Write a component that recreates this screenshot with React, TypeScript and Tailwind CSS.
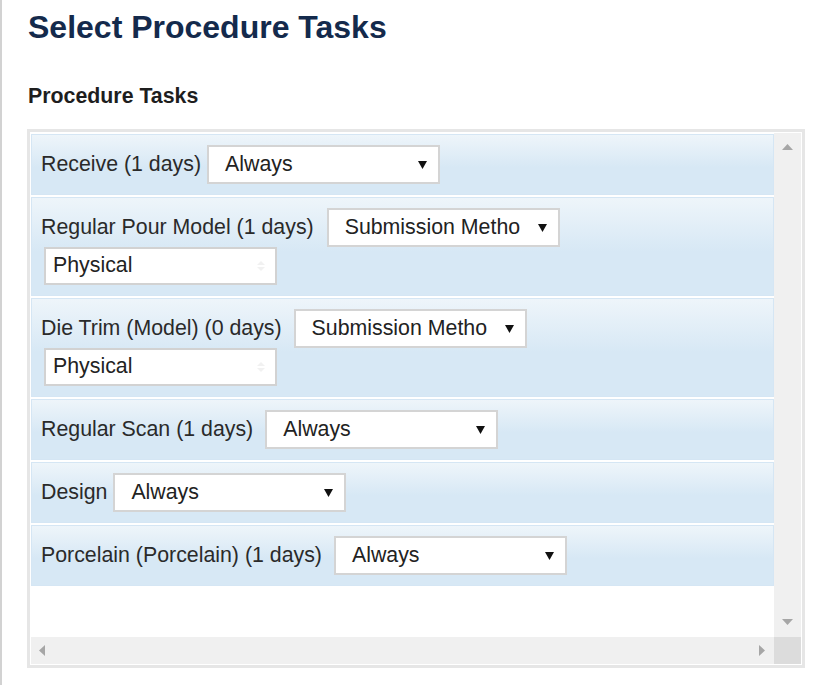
import React from "react";

const font = { fontFamily: '"Liberation Sans", Arial, sans-serif' };

function Arrow() {
  return (
    <svg width="9" height="9" viewBox="0 0 9 9" className="shrink-0">
      <polygon points="0,1 9,1 4.5,9" fill="#111" />
    </svg>
  );
}

function Select({ value, ml }: { value: string; ml: string }) {
  return (
    <div
      className={`${ml} flex h-[39px] w-[233px] shrink-0 items-center justify-between border-2 border-[#d4d4d4] bg-white pl-[16px] pr-[11px]`}
    >
      <span className="whitespace-nowrap text-[21.33px] leading-none text-[#222]">{value}</span>
      <Arrow />
    </div>
  );
}

function Input() {
  return (
    <div className="ml-[3px] flex h-[38px] w-[233px] items-center justify-between border-2 border-[#d2d2d2] bg-white pl-[7px] pr-[10px]">
      <span className="text-[21.33px] leading-none text-[#222]">Physical</span>
      <svg width="8" height="10" viewBox="0 0 8 10">
        <polygon points="4,0 8,4 0,4" fill="#f1f1f1" />
        <polygon points="0,6 8,6 4,10" fill="#f1f1f1" />
      </svg>
    </div>
  );
}

type Row = { label: string; value: string; ml: string; input?: boolean };

const rows: Row[] = [
  { label: "Receive (1 days)", value: "Always", ml: "ml-[6px]" },
  { label: "Regular Pour Model (1 days)", value: "Submission Metho", ml: "ml-[13px]", input: true },
  { label: "Die Trim (Model) (0 days)", value: "Submission Metho", ml: "ml-[12px]", input: true },
  { label: "Regular Scan (1 days)", value: "Always", ml: "ml-[12px]" },
  { label: "Design", value: "Always", ml: "ml-[6px]" },
  { label: "Porcelain (Porcelain) (1 days)", value: "Always", ml: "ml-[12px]" },
];

export default function App() {
  return (
    <div style={font} className="min-h-[685px] w-[824px] border-l-2 border-[#d2d2d2] bg-white">
      <h1 className="pl-[26px] pt-[10px] text-[32px] font-bold leading-[35px] text-[#142a4c]">
        Select Procedure Tasks
      </h1>
      <h2 className="mt-[39px] pl-[26px] text-[21.33px] font-bold leading-[24px] text-[#1e1e1e]">
        Procedure Tasks
      </h2>
      <div className="ml-[25px] mt-[21px] h-[539px] w-[778px] border-[3px] border-[#e6e6e6] bg-white p-[1px]">
        <div className="grid h-full grid-cols-[1fr_27px] grid-rows-[1fr_27px]">
          <div className="flex flex-col gap-[2px] overflow-hidden pt-[1px]">
            {rows.map((r) => (
              <div
                key={r.label}
                className="border border-[#d5e6f4] bg-[linear-gradient(to_bottom,#eef5fa,#d7e8f5_55%,#d7e8f5)] pb-[10px] pl-[9px] pt-[10px]"
              >
                <div className="flex items-center">
                  <span className="whitespace-nowrap text-[21.33px] leading-none text-[#2a2a2a]">{r.label}</span>
                  <Select value={r.value} ml={r.ml} />
                </div>
                {r.input && <Input />}
              </div>
            ))}
          </div>
          <div className="flex flex-col items-center justify-between bg-[#f0f0f0] pb-[12px] pt-[11px]">
            <svg width="11" height="6" viewBox="0 0 11 6">
              <polygon points="5.5,0 11,6 0,6" fill="#a6a6a6" />
            </svg>
            <svg width="11" height="6" viewBox="0 0 11 6">
              <polygon points="0,0 11,0 5.5,6" fill="#a6a6a6" />
            </svg>
          </div>
          <div className="flex items-center justify-between bg-[#f0f0f0] pl-[8px] pr-[9px]">
            <svg width="6" height="11" viewBox="0 0 6 11">
              <polygon points="6,0 6,11 0,5.5" fill="#a6a6a6" />
            </svg>
            <svg width="6" height="11" viewBox="0 0 6 11">
              <polygon points="0,0 0,11 6,5.5" fill="#a6a6a6" />
            </svg>
          </div>
          <div className="bg-[#dcdcdc]" />
        </div>
      </div>
    </div>
  );
}
